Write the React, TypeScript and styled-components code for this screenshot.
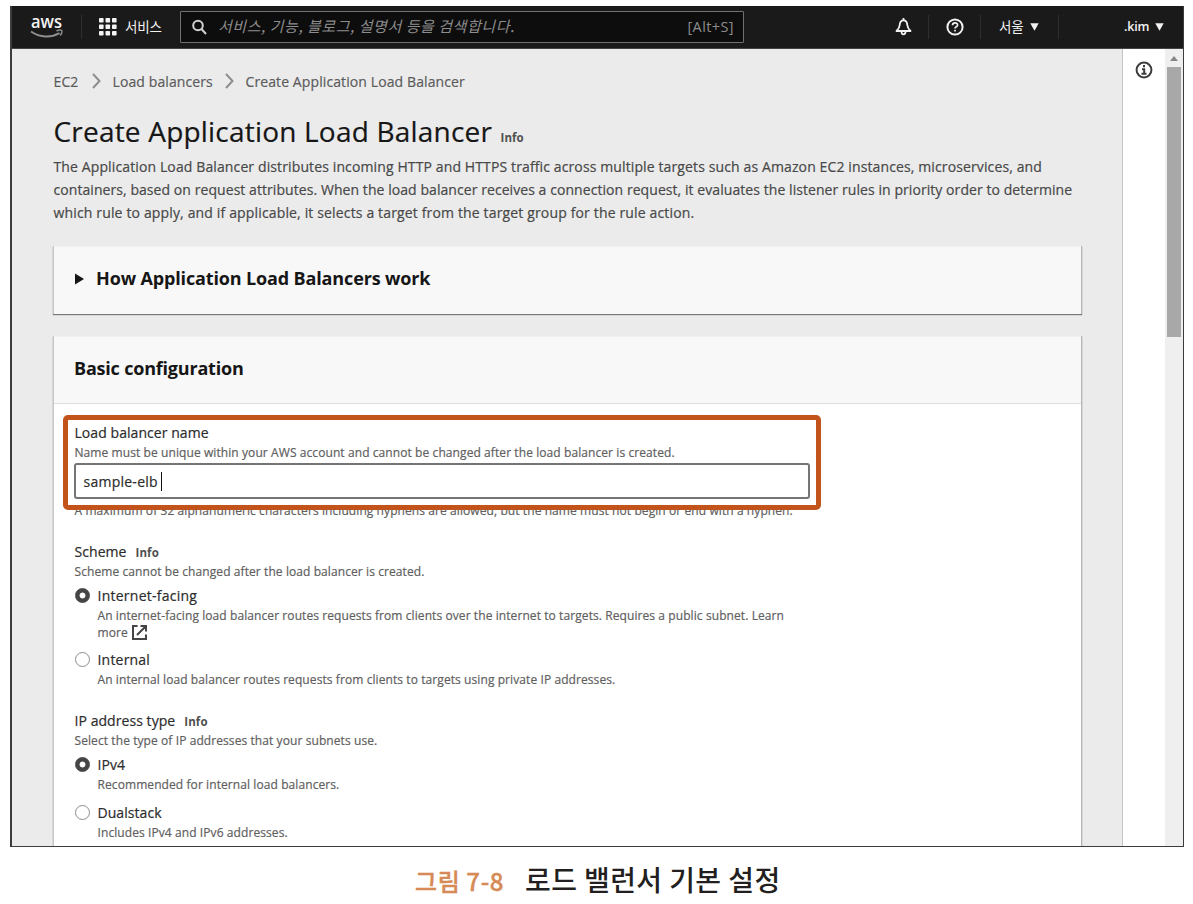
import React from "react";
import styled, { createGlobalStyle } from "styled-components";

const GlobalStyle = createGlobalStyle`
  * { box-sizing: border-box; }
  body {
    margin: 0;
    background: #fff;
    font-family: "Open Sans", "Noto Sans", "Noto Sans CJK KR", sans-serif;
    overflow: hidden;
  }
`;

const Page = styled.div`
  width: 1193px;
  height: 904px;
  padding: 6px 9px 0 10px;
  display: flex;
  flex-direction: column;
`;

const Frame = styled.div`
  height: 841px;
  border: 1px solid #3c3c3c;
  border-left-width: 2px;
  border-top: 0;
  display: flex;
  flex-direction: column;
  overflow: hidden;
`;

const TopBar = styled.header`
  height: 43px;
  flex: none;
  margin-left: -1px;
  background: #1a1a1a;
  border-bottom: 1px solid #444;
  display: flex;
  align-items: center;
  color: #f2f2f2;
`;

const Logo = styled.svg`
  flex: none;
  margin-left: 19px;
  overflow: visible;
`;

const Divider = styled.span<{ $ml: number }>`
  flex: none;
  width: 1px;
  height: 24px;
  margin-left: ${(p) => p.$ml}px;
  background: #2e2e2e;
`;

const Glyph = styled.svg<{ $ml: number }>`
  flex: none;
  display: block;
  margin-left: ${(p) => p.$ml}px;
`;

const NavText = styled.span<{ $ml: number; $w: number }>`
  flex: none;
  margin-left: ${(p) => p.$ml}px;
  width: ${(p) => p.$w}px;
  font: 400 13.5px/20px "Noto Sans CJK KR", sans-serif;
  letter-spacing: -0.2px;
  white-space: nowrap;
  padding-bottom: 3px;
`;

const UserName = styled.span`
  flex: none;
  margin-left: 65px;
  width: 26px;
  font: 600 12.5px/20px "Open Sans", sans-serif;
  letter-spacing: -0.2px;
  white-space: nowrap;
`;

const Search = styled.div`
  flex: none;
  width: 564px;
  height: 32px;
  margin: 0 0 0 17px;
  border: 1px solid #707070;
  border-radius: 1px;
  background: #0d0d0d;
  display: flex;
  align-items: center;
  color: #8c8c8c;
`;

const Placeholder = styled.span`
  flex: 1;
  margin: 0 0 2px 11px;
  font: italic 400 15px/20px "Noto Sans CJK KR", sans-serif;
  letter-spacing: 0.55px;
  white-space: nowrap;
`;

const Shortcut = styled.span`
  font: 400 14.5px/20px "Open Sans", sans-serif;
  letter-spacing: 0.4px;
  margin-right: 9px;
`;

const Body = styled.div`
  flex: 1;
  min-height: 0;
  display: flex;
`;

const Main = styled.main`
  width: 1111px;
  flex: none;
  background: #ebebeb;
  border-right: 1px solid #c6c6c6;
  padding: 21px 40px 0 41px;
  overflow: hidden;
  -webkit-text-stroke: 0.2px currentColor;
`;

const Crumbs = styled.nav`
  display: flex;
  align-items: center;
  height: 22px;
  margin-left: 0.5px;
  font-size: 14px;
  line-height: 23px;
  color: #5c5c5c;
`;

const Crumb = styled.span<{ $w: number }>`
  width: ${(p) => p.$w}px;
  letter-spacing: 0.1px;
  white-space: nowrap;
`;

const Chevron = styled.svg`
  margin: 0 12px 0 13px;
  flex: none;
`;

const TitleRow = styled.div`
  display: flex;
  align-items: baseline;
  height: 40px;
  margin-top: 19px;
`;

const Title = styled.h1`
  margin: 0 0 0 0.5px;
  width: 447px;
  font-weight: 400;
  font-size: 28px;
  line-height: 40px;
  letter-spacing: 0.2px;
  color: #161616;
  white-space: nowrap;
`;

const Info = styled.span`
  font-weight: 700;
  font-size: 11.5px;
  line-height: 18px;
  letter-spacing: 0.1px;
  color: #505050;
  -webkit-text-stroke: 0;
`;

const Description = styled.p`
  margin: 4px 0 0 0.5px;
  font-size: 14px;
  line-height: 23px;
  color: #484848;
`;

const Line = styled.span<{ $ls: number }>`
  display: block;
  white-space: nowrap;
  letter-spacing: ${(p) => p.$ls}px;
`;

const Card = styled.section<{ $h: number; $mt: number }>`
  height: ${(p) => p.$h}px;
  margin-top: ${(p) => p.$mt}px;
  background: #fff;
  border-left: 1px solid #c8c8c8;
  border-right: 1px solid #b5b5b5;
  box-shadow: 0 1px 1px #777;
  position: relative;
`;

const CardHeader = styled.div`
  height: 67px;
  background: #f8f8f8;
  border-top: 1px solid #f1f1f1;
  padding: 0 20px;
  display: flex;
  align-items: center;
`;

const HeaderRule = styled.div<{ $plain?: boolean }>`
  height: 1px;
  background: ${(p) => (p.$plain ? "#f8f8f8" : "#dedede")};
`;

const Heading = styled.h2<{ $ls: number }>`
  margin: 0 0 4px;
  font-size: 18px;
  line-height: 26px;
  font-weight: 700;
  letter-spacing: ${(p) => p.$ls}px;
  color: #161616;
  white-space: nowrap;
  -webkit-text-stroke: 0;
`;

const Caret = styled.svg`
  margin: 0 12px 2px 0;
`;

const Form = styled.div`
  padding: 19px 20px 0 20.5px;
`;

const Field = styled.div<{ $mt: number }>`
  margin-top: ${(p) => p.$mt}px;
`;

const Label = styled.div<{ $ls?: number }>`
  display: flex;
  align-items: baseline;
  gap: 9px;
  height: 20px;
  font-size: 14px;
  line-height: 20px;
  color: #2c2c2c;
  letter-spacing: ${(p) => p.$ls ?? 0.06}px;
  white-space: nowrap;
`;

const Hint = styled.div<{ $ls?: number; $h?: number }>`
  height: ${(p) => p.$h ?? 18}px;
  display: flex;
  align-items: center;
  font-size: 12px;
  color: #5f5f5f;
  letter-spacing: ${(p) => p.$ls ?? 0.085}px;
  white-space: nowrap;
`;

const Input = styled.div`
  width: 736px;
  height: 36px;
  margin: 2px 0 2px -1px;
  border: 2px solid #757575;
  border-radius: 3px;
  background: #fff;
  padding-left: 8px;
  display: flex;
  align-items: center;
  font-size: 14px;
  letter-spacing: 0.25px;
  color: #2c2c2c;
`;

const TextCursor = styled.span`
  width: 1px;
  height: 19px;
  margin-left: 3px;
  background: #111;
`;

const Highlight = styled.div`
  position: absolute;
  left: 9px;
  top: 79px;
  width: 758px;
  height: 95px;
  border: 5px solid #c2541b;
  border-radius: 5px;
`;

const Option = styled.div<{ $mt: number }>`
  margin-top: ${(p) => p.$mt}px;
  display: grid;
  grid-template-columns: 23px 1fr;
`;

const Radio = styled.span<{ $on?: boolean }>`
  width: 15px;
  height: 15px;
  margin-top: 2px;
  border-radius: 50%;
  border: 1px solid ${(p) => (p.$on ? "#454545" : "#8c8c8c")};
  background: ${(p) => (p.$on ? "radial-gradient(circle, #fff 2.6px, #454545 3.3px)" : "#fff")};
`;

const ToolsPanel = styled.aside`
  width: 42px;
  flex: none;
  background: #fff;
  display: flex;
  justify-content: center;
  padding-top: 12px;
`;

const Scrollbar = styled.div`
  flex: 1;
  background: #efefef;
  display: flex;
  flex-direction: column;
  align-items: center;
  padding: 7px 0 0 0;
`;

const Thumb = styled.div`
  width: 14px;
  height: 270px;
  margin-top: 6px;
  background: #a8a8a8;
`;

const Caption = styled.div`
  display: flex;
  align-items: baseline;
  padding: 12px 0 0 405px;
  font: 500 28px/40px "Noto Sans CJK KR", sans-serif;
  color: #231f20;
  white-space: nowrap;
`;

const FigureNo = styled.span`
  width: 110px;
  font-size: 24px;
  color: #d68a55;
  letter-spacing: 0.6px;
  -webkit-text-stroke: 0.4px currentColor;
`;

const CaptionText = styled.span`
  letter-spacing: 0.4px;
`;

const CrumbArrow = () => (
  <Chevron width="9" height="16" viewBox="0 0 9 16" fill="none" stroke="#8e8e8e" strokeWidth="2">
    <path d="M1 1l6.500 7L1 15" />
  </Chevron>
);

const DownArrow = ({ ml }: { ml: number }) => (
  <Glyph $ml={ml} width="9" height="8" viewBox="0 0 9 8" fill="#f2f2f2">
    <path d="M.3.300h8.400L4.500 7.700z" />
  </Glyph>
);

interface ChoiceProps {
  title: string;
  on?: boolean;
  mt: number;
  ls?: number;
  children: React.ReactNode;
}

const Choice = ({ title, on, mt, ls, children }: ChoiceProps) => (
  <Option $mt={mt}>
    <Radio $on={on} />
    <div>
      <Label $ls={ls}>{title}</Label>
      {children}
    </div>
  </Option>
);

export default function App() {
  return (
    <Page>
      <GlobalStyle />
      <Frame>
        <TopBar>
          <Logo width="34" height="26" viewBox="0 0 34 26">
            <text x="1" y="13.500" fill="#f4f4f4" fontFamily="Open Sans, sans-serif" fontSize="18" fontWeight="600" textLength="31" lengthAdjust="spacingAndGlyphs">aws</text>
            <path d="M1 17.500c9 6.300 20 6.400 28.500 1.600" fill="none" stroke="#8f8f8f" strokeWidth="2" />
            <path d="M26.500 17c2-1 4.500-1 5.300-.5.6.8-.2 3.500-1.600 5" fill="none" stroke="#8f8f8f" strokeWidth="1.400" />
          </Logo>
          <Divider $ml={17} />
          <Glyph $ml={17} width="18" height="18" viewBox="0 0 18 18" fill="#f4f4f4">
            {[0, 6.5, 13].map((y) => [0, 6.5, 13].map((x) => <rect key={`${x}-${y}`} x={x} y={y} width="4.600" height="4.600" rx=".8" />))}
          </Glyph>
          <NavText $ml={8} $w={38}>서비스</NavText>
          <Search>
            <Glyph $ml={11} width="15" height="16" viewBox="0 0 15 16" fill="none" stroke="#d0d0d0" strokeWidth="2">
              <circle cx="6" cy="6.500" r="4.800" />
              <path d="M9.500 10l4.500 5" />
            </Glyph>
            <Placeholder>서비스, 기능, 블로그, 설명서 등을 검색합니다.</Placeholder>
            <Shortcut>[Alt+S]</Shortcut>
          </Search>
          <Glyph $ml={151} width="17" height="18" viewBox="0 0 17 18" fill="none" stroke="#f2f2f2" strokeWidth="1.800" strokeLinejoin="round">
            <path d="M8.500 2.300C5.800 2.300 4.800 4.500 4.700 7c-.1 2.800-1.200 4-3.200 6h14c-2-2-3.100-3.200-3.200-6-.1-2.500-1.100-4.700-3.800-4.700z" />
            <path d="M8.500 0v2.500M6.500 13.500c0 3.800 4 3.800 4 0" />
          </Glyph>
          <Divider $ml={16} />
          <Glyph $ml={17} width="18" height="18" viewBox="0 0 18 18" fill="none" stroke="#f2f2f2" strokeWidth="2">
            <circle cx="9" cy="9" r="7.600" />
            <path d="M6.500 7.300c0-3.300 5.200-3.200 5.100-.2 0 1.700-2.600 1.700-2.600 3.400M9 11.800v1.800" strokeWidth="1.700" />
          </Glyph>
          <Divider $ml={16} />
          <NavText $ml={18} $w={25}>서울</NavText>
          <DownArrow ml={6} />
          <Divider $ml={19} />
          <UserName>.kim</UserName>
          <DownArrow ml={5} />
        </TopBar>
        <Body>
          <Main>
            <Crumbs>
              <Crumb $w={25}>EC2</Crumb>
              <CrumbArrow />
              <Crumb $w={99}>Load balancers</Crumb>
              <CrumbArrow />
              <Crumb $w={220}>Create Application Load Balancer</Crumb>
            </Crumbs>
            <TitleRow>
              <Title>Create Application Load Balancer</Title>
              <Info>Info</Info>
            </TitleRow>
            <Description>
              <Line $ls={0.12}>The Application Load Balancer distributes incoming HTTP and HTTPS traffic across multiple targets such as Amazon EC2 instances, microservices, and</Line>
              <Line $ls={0.065}>containers, based on request attributes. When the load balancer receives a connection request, it evaluates the listener rules in priority order to determine</Line>
              <Line $ls={0.15}>which rule to apply, and if applicable, it selects a target from the target group for the rule action.</Line>
            </Description>
            <Card $h={68} $mt={22}>
              <CardHeader>
                <Caret width="10" height="12" viewBox="0 0 10 12" fill="#161616"><path d="M1 0.500l9 5.500-9 5.500z" /></Caret>
                <Heading $ls={-0.14}>How Application Load Balancers work</Heading>
              </CardHeader>
              <HeaderRule $plain />
            </Card>
            <Card $h={530} $mt={22}>
              <CardHeader>
                <Heading $ls={-0.2}>Basic configuration</Heading>
              </CardHeader>
              <HeaderRule />
              <Form>
                <Label>Load balancer name</Label>
                <Hint>Name must be unique within your AWS account and cannot be changed after the load balancer is created.</Hint>
                <Input>sample-elb<TextCursor /></Input>
                <Hint>A maximum of 32 alphanumeric characters including hyphens are allowed, but the name must not begin or end with a hyphen.</Hint>
                <Field $mt={23}>
                  <Label>Scheme <Info>Info</Info></Label>
                  <Hint>Scheme cannot be changed after the load balancer is created.</Hint>
                  <Choice title="Internet-facing" on mt={6} ls={0.25}>
                    <Hint>An internet-facing load balancer routes requests from clients over the internet to targets. Requires a public subnet. Learn</Hint>
                    <Hint $h={17}>
                      more
                      <Glyph $ml={4} width="15" height="15" viewBox="0 0 15 15" fill="none" stroke="#454545" strokeWidth="2">
                        <path d="M5.500 1H1v13h13V9.500M8.500 1H14v5.500M14 1L5 10" />
                      </Glyph>
                    </Hint>
                  </Choice>
                  <Choice title="Internal" mt={9} ls={0.2}>
                    <Hint>An internal load balancer routes requests from clients to targets using private IP addresses.</Hint>
                  </Choice>
                </Field>
                <Field $mt={23}>
                  <Label>IP address type <Info>Info</Info></Label>
                  <Hint>Select the type of IP addresses that your subnets use.</Hint>
                  <Choice title="IPv4" on mt={6}>
                    <Hint>Recommended for internal load balancers.</Hint>
                  </Choice>
                  <Choice title="Dualstack" mt={10}>
                    <Hint>Includes IPv4 and IPv6 addresses.</Hint>
                  </Choice>
                </Field>
              </Form>
              <Highlight />
            </Card>
          </Main>
          <ToolsPanel>
            <svg width="18" height="18" viewBox="0 0 18 18" fill="none" stroke="#3d3d3d" strokeWidth="2">
              <circle cx="9" cy="9" r="7.400" />
              <path d="M9 4v2.200M7 8.300h2.200v4M6.500 12.800h5" />
            </svg>
          </ToolsPanel>
          <Scrollbar>
            <svg width="8" height="5" viewBox="0 0 8 5" fill="#858585"><path d="M4 0l4 5H0z" /></svg>
            <Thumb />
          </Scrollbar>
        </Body>
      </Frame>
      <Caption>
        <FigureNo>그림 7-8</FigureNo>
        <CaptionText>로드 밸런서 기본 설정</CaptionText>
      </Caption>
    </Page>
  );
}
